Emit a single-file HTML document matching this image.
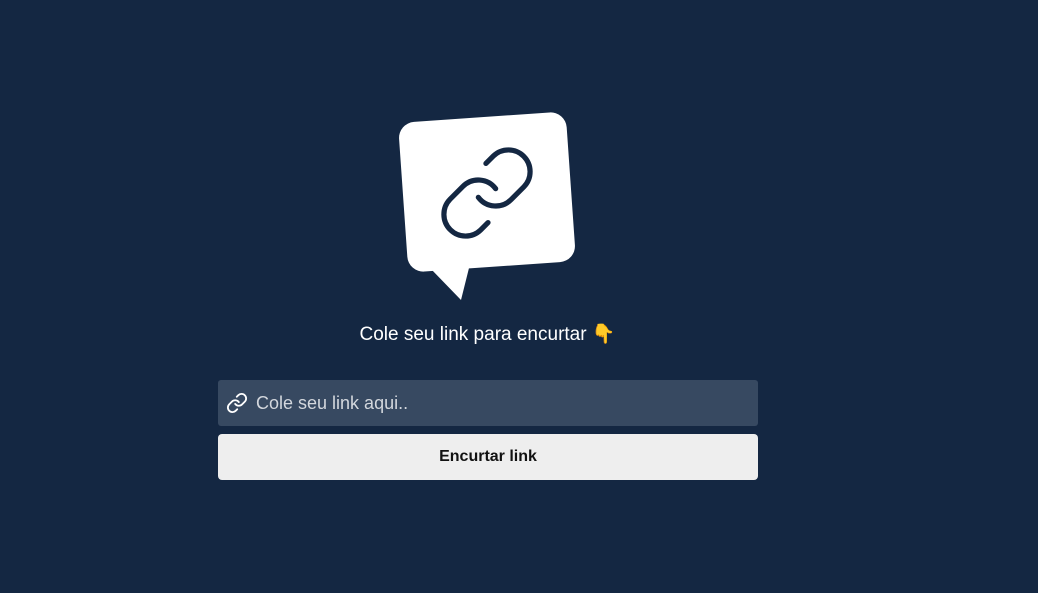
<!DOCTYPE html>
<html><head><meta charset="utf-8"><style>
html,body{margin:0;padding:0;width:1038px;height:593px;background:#142742;overflow:hidden;font-family:"Liberation Sans",sans-serif}
.bubble{position:absolute;left:403px;top:117px;width:168px;height:150px;background:#fff;border-radius:16px;transform:rotate(-4deg)}
.tail{position:absolute;left:0;top:0}
.title{position:absolute;left:0;width:975px;text-align:center;top:322px;color:#fff;font-size:19px}
.input{position:absolute;left:218px;top:380px;width:540px;height:46px;background:#374961;border-radius:3px}
.input span{position:absolute;left:38px;top:13px;color:#d3d7dd;font-size:18px}
.btn{position:absolute;left:218px;top:434px;width:540px;height:46px;background:#eeeeee;border-radius:4px;text-align:center;line-height:46px;font-weight:bold;font-size:16px;color:#111}
</style></head><body>
<svg class="tail" width="1038" height="593"><polygon points="430,268 461,300 470,264" fill="#fff"/></svg>
<div class="bubble"></div>
<svg style="position:absolute;left:435px;top:141px" width="104" height="104" viewBox="0 0 24 24" fill="none" stroke="#142742" stroke-width="1.2" stroke-linecap="round" stroke-linejoin="round"><path d="M10 13a5 5 0 0 0 7.54.54l3-3a5 5 0 0 0-7.07-7.07l-1.72 1.71"/><path d="M14 11a5 5 0 0 0-7.54-.54l-3 3a5 5 0 0 0 7.07 7.07l1.71-1.71"/></svg>
<div class="title">Cole seu link para encurtar 👇</div>
<div class="input">
<svg style="position:absolute;left:8px;top:12px" width="22" height="22" viewBox="0 0 24 24" fill="none" stroke="#fff" stroke-width="2" stroke-linecap="round" stroke-linejoin="round"><path d="M10 13a5 5 0 0 0 7.54.54l3-3a5 5 0 0 0-7.07-7.07l-1.72 1.71"/><path d="M14 11a5 5 0 0 0-7.54-.54l-3 3a5 5 0 0 0 7.07 7.07l1.71-1.71"/></svg>
<span>Cole seu link aqui..</span></div>
<div class="btn">Encurtar link</div>
</body></html>
